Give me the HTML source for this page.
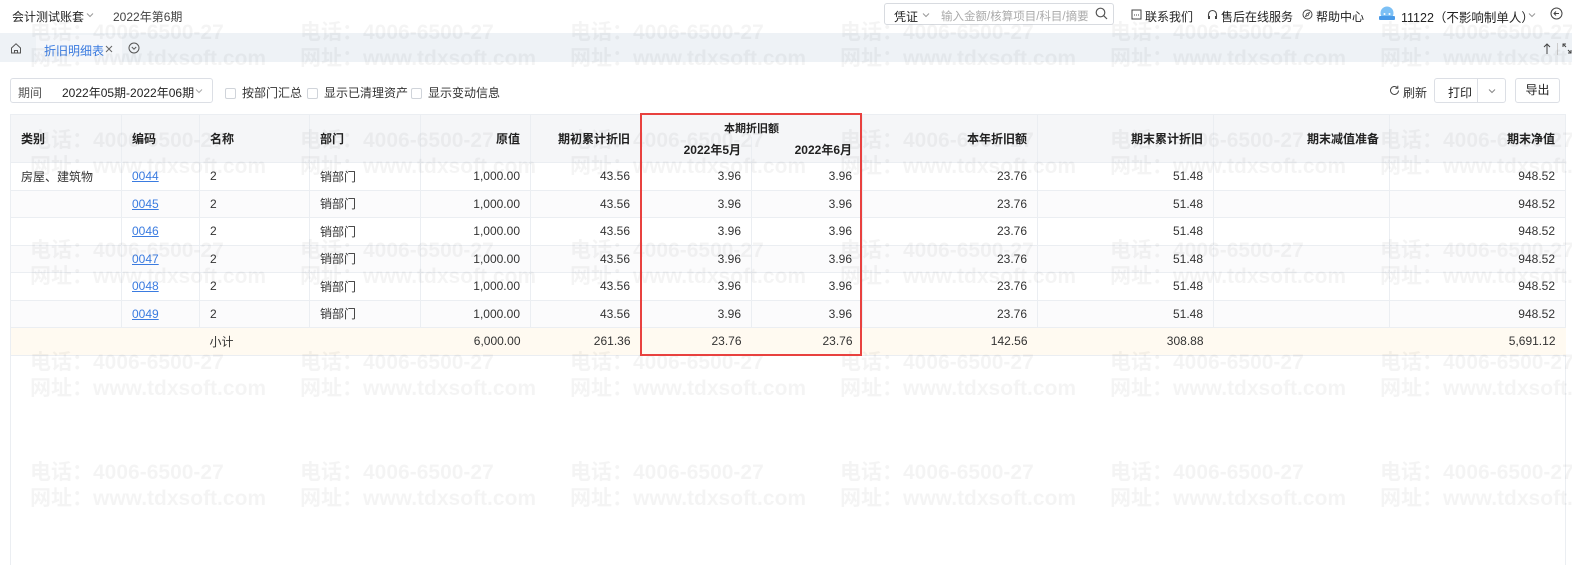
<!DOCTYPE html>
<html><head><meta charset="utf-8"><style>
*{margin:0;padding:0;box-sizing:border-box}
body{width:1572px;height:565px;overflow:hidden;background:#fff;font-family:"Liberation Sans","Noto Sans CJK SC",sans-serif;font-size:12px;color:#333;position:relative}
.a{position:absolute;white-space:nowrap}
.wm{position:absolute;font-size:21px;font-weight:bold;color:rgba(0,0,0,0.045);white-space:nowrap;line-height:26px;z-index:50;pointer-events:none}
table{position:absolute;left:10px;top:114px;border-collapse:collapse;table-layout:fixed;width:1555px}
td,th{height:27.5px;padding:0 10px;border:1px solid #ebeef2;font-size:12px;overflow:hidden;white-space:nowrap}
th{background:#f5f6f8;font-weight:bold;color:#222}
td.r,th.r{text-align:right}
th.l,td.l{text-align:left}
tr.g td{background:#fbfbfc}
tr.s td{background:#fffaf1;border-left:none;border-right:none}
a{color:#3a7be0;text-decoration:underline}
.cb{display:inline-block;width:11px;height:11px;border:1px solid #d0d4da;border-radius:2px;vertical-align:-2px;margin-right:6px}
.btn{position:absolute;border:1px solid #dcdfe5;border-radius:3px;height:25px;line-height:23px;text-align:center;background:#fff}
.chev{position:absolute}
</style></head><body>
<!-- top bar -->
<div class="a" style="left:12px;top:8px;color:#222">会计测试账套</div>
<svg class="chev" style="left:86px;top:12px" width="8" height="6"><path d="M1 1.5l3 3 3-3" fill="none" stroke="#999"/></svg>
<div class="a" style="left:113px;top:8px;color:#444">2022年第6期</div>
<div class="a" style="left:884px;top:3px;width:230px;height:22px;border:1px solid #d8dbe0;border-radius:3px"></div>
<div class="a" style="left:894px;top:8px;color:#222">凭证</div>
<svg class="chev" style="left:922px;top:12px" width="8" height="6"><path d="M1 1.5l3 3 3-3" fill="none" stroke="#999"/></svg>
<div class="a" style="left:941px;top:8px;color:#aaa;font-size:11.5px">输入金额/核算项目/科目/摘要</div>
<svg class="a" style="left:1095px;top:7px" width="13" height="13" viewBox="0 0 13 13"><circle cx="5.5" cy="5.5" r="4.3" fill="none" stroke="#555" stroke-width="1.2"/><path d="M8.7 8.7L12 12" stroke="#555" stroke-width="1.2"/></svg>
<svg class="a" style="left:1131px;top:9px" width="11" height="11"><rect x="1" y="1" width="9" height="9" fill="none" stroke="#444"/><path d="M3 6h1M5 6h1M7 6h1" stroke="#444"/></svg>
<div class="a" style="left:1145px;top:8px;color:#222">联系我们</div>
<svg class="a" style="left:1207px;top:9px" width="11" height="11"><path d="M1.5 8V5.5a4 4 0 018 0V8" fill="none" stroke="#444" stroke-width="1.1"/><rect x="1" y="7" width="2" height="3" fill="#444"/><rect x="8" y="7" width="2" height="3" fill="#444"/></svg>
<div class="a" style="left:1221px;top:8px;color:#222">售后在线服务</div>
<svg class="a" style="left:1302px;top:9px" width="11" height="11"><circle cx="5.5" cy="5.5" r="4.5" fill="none" stroke="#444"/><path d="M7.5 3.5L6.3 6.3 3.5 7.5 4.7 4.7z" fill="none" stroke="#444" stroke-width=".8"/></svg>
<div class="a" style="left:1316px;top:8px;color:#222">帮助中心</div>
<svg class="a" style="left:1378px;top:5px" width="18" height="16"><circle cx="9" cy="8" r="6.5" fill="#7cc0f5"/><rect x="1" y="11" width="16" height="4" rx="1" fill="#4a9be8"/><circle cx="6.5" cy="9" r="1" fill="#fff"/><circle cx="11.5" cy="9" r="1" fill="#fff"/></svg>
<div class="a" style="left:1401px;top:7px;color:#222;font-size:12.5px">11122（不影响制单人）</div>
<svg class="chev" style="left:1528px;top:12px" width="8" height="6"><path d="M1 1.5l3 3 3-3" fill="none" stroke="#999"/></svg>
<svg class="a" style="left:1550px;top:7px" width="13" height="13"><circle cx="6.5" cy="6.5" r="5.5" fill="none" stroke="#444"/><path d="M9 6.5H4M6 4.5L4 6.5 6 8.5" fill="none" stroke="#444"/></svg>
<!-- tab bar -->
<div class="a" style="left:0;top:33px;width:1572px;height:29px;background:#eef2f6"></div>
<div class="a" style="left:36px;top:35px;width:86px;height:27px;background:#f5f7fa"></div>
<svg class="a" style="left:10px;top:42px" width="12" height="12"><path d="M1.5 6L6 1.8 10.5 6V11h-9z" fill="none" stroke="#555"/><path d="M4.5 11V8.5h3V11" fill="none" stroke="#555"/></svg>
<div class="a" style="left:44px;top:42px;color:#3a7be0">折旧明细表</div>
<svg class="a" style="left:105px;top:45px" width="8" height="8"><path d="M1 1l6 6M7 1L1 7" stroke="#666"/></svg>
<svg class="a" style="left:128px;top:42px" width="12" height="12"><circle cx="6" cy="6" r="5" fill="none" stroke="#555"/><path d="M3.8 5l2.2 2.2L8.2 5" fill="none" stroke="#555"/></svg>
<svg class="a" style="left:1543px;top:43px" width="8" height="11"><path d="M4 1v10M1 4l3-3 3 3" fill="none" stroke="#444"/></svg>
<div class="a" style="left:1557px;top:43px;width:1px;height:12px;background:#ccc"></div>
<svg class="a" style="left:1562px;top:43px" width="10" height="11"><path d="M1 4V1h3M9 7v3H6M1 1l3 3M9 10L6 7" fill="none" stroke="#444"/></svg>
<!-- toolbar -->
<div class="a" style="left:10px;top:78px;width:203px;height:25px;border:1px solid #dcdfe5;border-radius:3px"></div>
<div class="a" style="left:18px;top:84px;color:#555">期间</div>
<div class="a" style="left:62px;top:84px;color:#222">2022年05期-2022年06期</div>
<svg class="chev" style="left:195px;top:88px" width="8" height="6"><path d="M1 1.5l3 3 3-3" fill="none" stroke="#aaa"/></svg>
<div class="a" style="left:225px;top:84px;color:#333"><span class="cb"></span>按部门汇总</div>
<div class="a" style="left:307px;top:84px;color:#333"><span class="cb"></span>显示已清理资产</div>
<div class="a" style="left:411px;top:84px;color:#333"><span class="cb"></span>显示变动信息</div>
<svg class="a" style="left:1389px;top:85px" width="11" height="11"><path d="M9.5 5.5a4 4 0 11-1.2-2.9" fill="none" stroke="#444"/><path d="M8.8 0.8v2.4H6.4" fill="none" stroke="#444"/></svg>
<div class="a" style="left:1403px;top:84px;color:#333">刷新</div>
<div class="btn" style="left:1434px;top:78px;width:72px"></div>
<div class="a" style="left:1448px;top:84px;color:#222">打印</div>
<div class="a" style="left:1477px;top:79px;width:1px;height:23px;background:#dcdfe5"></div>
<svg class="chev" style="left:1488px;top:88px" width="8" height="6"><path d="M1 1.5l3 3 3-3" fill="none" stroke="#888"/></svg>
<div class="btn" style="left:1515px;top:78px;width:45px;color:#222">导出</div>
<!-- container border -->
<div class="a" style="left:10px;top:114px;width:1px;height:451px;background:#ebeef2"></div>
<div class="a" style="left:1565px;top:114px;width:1px;height:451px;background:#ebeef2"></div>
<table>
<colgroup><col style="width:111px"><col style="width:78px"><col style="width:110px"><col style="width:111px"><col style="width:110px"><col style="width:110px"><col style="width:111px"><col style="width:111px"><col style="width:175px"><col style="width:176px"><col style="width:176px"><col style="width:176px"></colgroup>
<tr><th class="l" rowspan="2" style="height:48px">类别</th><th class="l" rowspan="2">编码</th><th class="l" rowspan="2">名称</th><th class="l" rowspan="2">部门</th><th class="r" rowspan="2">原值</th><th class="r" rowspan="2">期初累计折旧</th><th colspan="2" style="height:22px;text-align:center;border-bottom:none;font-size:11px;padding-top:4px">本期折旧额</th><th class="r" rowspan="2">本年折旧额</th><th class="r" rowspan="2">期末累计折旧</th><th class="r" rowspan="2">期末减值准备</th><th class="r" rowspan="2">期末净值</th></tr>
<tr><th class="r" style="height:26px;border-top:none">2022年5月</th><th class="r" style="height:26px;border-top:none">2022年6月</th></tr>
<tr><td>房屋、建筑物</td><td><a>0044</a></td><td>2</td><td>销部门</td><td class="r">1,000.00</td><td class="r">43.56</td><td class="r">3.96</td><td class="r">3.96</td><td class="r">23.76</td><td class="r">51.48</td><td></td><td class="r">948.52</td></tr>
<tr class="g"><td></td><td><a>0045</a></td><td>2</td><td>销部门</td><td class="r">1,000.00</td><td class="r">43.56</td><td class="r">3.96</td><td class="r">3.96</td><td class="r">23.76</td><td class="r">51.48</td><td></td><td class="r">948.52</td></tr>
<tr><td></td><td><a>0046</a></td><td>2</td><td>销部门</td><td class="r">1,000.00</td><td class="r">43.56</td><td class="r">3.96</td><td class="r">3.96</td><td class="r">23.76</td><td class="r">51.48</td><td></td><td class="r">948.52</td></tr>
<tr class="g"><td></td><td><a>0047</a></td><td>2</td><td>销部门</td><td class="r">1,000.00</td><td class="r">43.56</td><td class="r">3.96</td><td class="r">3.96</td><td class="r">23.76</td><td class="r">51.48</td><td></td><td class="r">948.52</td></tr>
<tr><td></td><td><a>0048</a></td><td>2</td><td>销部门</td><td class="r">1,000.00</td><td class="r">43.56</td><td class="r">3.96</td><td class="r">3.96</td><td class="r">23.76</td><td class="r">51.48</td><td></td><td class="r">948.52</td></tr>
<tr class="g"><td></td><td><a>0049</a></td><td>2</td><td>销部门</td><td class="r">1,000.00</td><td class="r">43.56</td><td class="r">3.96</td><td class="r">3.96</td><td class="r">23.76</td><td class="r">51.48</td><td></td><td class="r">948.52</td></tr>
<tr class="s"><td></td><td></td><td>小计</td><td></td><td class="r">6,000.00</td><td class="r">261.36</td><td class="r">23.76</td><td class="r">23.76</td><td class="r">142.56</td><td class="r">308.88</td><td></td><td class="r">5,691.12</td></tr>
</table>
<div class="a" style="left:640px;top:113px;width:222px;height:243px;border:2px solid #e8413f;z-index:60"></div>
<!-- watermarks -->
<div class="wm" style="left:30px;top:20px">电话：4006-6500-27<br>网址：www.tdxsoft.com</div>
<div class="wm" style="left:300px;top:20px">电话：4006-6500-27<br>网址：www.tdxsoft.com</div>
<div class="wm" style="left:570px;top:20px">电话：4006-6500-27<br>网址：www.tdxsoft.com</div>
<div class="wm" style="left:840px;top:20px">电话：4006-6500-27<br>网址：www.tdxsoft.com</div>
<div class="wm" style="left:1110px;top:20px">电话：4006-6500-27<br>网址：www.tdxsoft.com</div>
<div class="wm" style="left:1380px;top:20px">电话：4006-6500-27<br>网址：www.tdxsoft.com</div>
<div class="wm" style="left:30px;top:128px">电话：4006-6500-27<br>网址：www.tdxsoft.com</div>
<div class="wm" style="left:300px;top:128px">电话：4006-6500-27<br>网址：www.tdxsoft.com</div>
<div class="wm" style="left:570px;top:128px">电话：4006-6500-27<br>网址：www.tdxsoft.com</div>
<div class="wm" style="left:840px;top:128px">电话：4006-6500-27<br>网址：www.tdxsoft.com</div>
<div class="wm" style="left:1110px;top:128px">电话：4006-6500-27<br>网址：www.tdxsoft.com</div>
<div class="wm" style="left:1380px;top:128px">电话：4006-6500-27<br>网址：www.tdxsoft.com</div>
<div class="wm" style="left:30px;top:238px">电话：4006-6500-27<br>网址：www.tdxsoft.com</div>
<div class="wm" style="left:300px;top:238px">电话：4006-6500-27<br>网址：www.tdxsoft.com</div>
<div class="wm" style="left:570px;top:238px">电话：4006-6500-27<br>网址：www.tdxsoft.com</div>
<div class="wm" style="left:840px;top:238px">电话：4006-6500-27<br>网址：www.tdxsoft.com</div>
<div class="wm" style="left:1110px;top:238px">电话：4006-6500-27<br>网址：www.tdxsoft.com</div>
<div class="wm" style="left:1380px;top:238px">电话：4006-6500-27<br>网址：www.tdxsoft.com</div>
<div class="wm" style="left:30px;top:350px">电话：4006-6500-27<br>网址：www.tdxsoft.com</div>
<div class="wm" style="left:300px;top:350px">电话：4006-6500-27<br>网址：www.tdxsoft.com</div>
<div class="wm" style="left:570px;top:350px">电话：4006-6500-27<br>网址：www.tdxsoft.com</div>
<div class="wm" style="left:840px;top:350px">电话：4006-6500-27<br>网址：www.tdxsoft.com</div>
<div class="wm" style="left:1110px;top:350px">电话：4006-6500-27<br>网址：www.tdxsoft.com</div>
<div class="wm" style="left:1380px;top:350px">电话：4006-6500-27<br>网址：www.tdxsoft.com</div>
<div class="wm" style="left:30px;top:460px">电话：4006-6500-27<br>网址：www.tdxsoft.com</div>
<div class="wm" style="left:300px;top:460px">电话：4006-6500-27<br>网址：www.tdxsoft.com</div>
<div class="wm" style="left:570px;top:460px">电话：4006-6500-27<br>网址：www.tdxsoft.com</div>
<div class="wm" style="left:840px;top:460px">电话：4006-6500-27<br>网址：www.tdxsoft.com</div>
<div class="wm" style="left:1110px;top:460px">电话：4006-6500-27<br>网址：www.tdxsoft.com</div>
<div class="wm" style="left:1380px;top:460px">电话：4006-6500-27<br>网址：www.tdxsoft.com</div>
</body></html>
